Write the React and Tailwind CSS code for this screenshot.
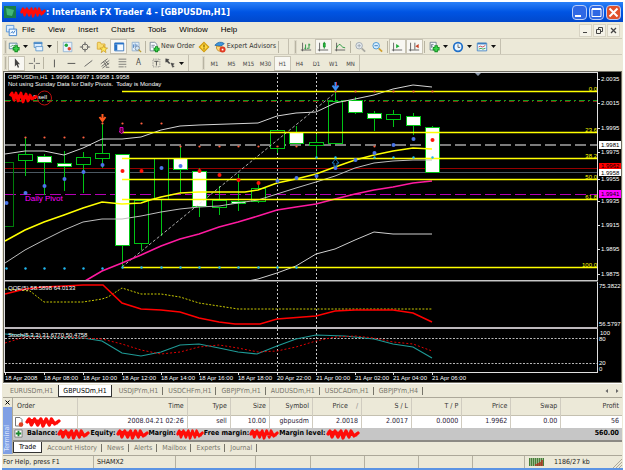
import React from "react";

const UI = "font-['DejaVu_Sans_Condensed','DejaVu_Sans',sans-serif]";

/* ---------- chart data ---------- */
const candles = [
  // x, high, low, bodyTop, bodyBottom, filled
  [25, 137, 176, 154, 160, 0],
  [44, 154, 195, 156, 162, 1],
  [64, 151, 191, 163, 166, 1],
  [83, 152, 193, 157, 164, 0],
  [102, 123, 168, 153, 158, 0],
  [122, 154, 266, 154, 245, 1],
  [141, 200, 250, 200, 243, 0],
  [161, 158, 236, 158, 199, 0],
  [180, 146, 193, 158, 169, 1],
  [199, 168, 217, 171, 206, 1],
  [219, 186, 215, 200, 207, 0],
  [238, 174, 211, 201, 203, 1],
  [258, 184, 203, 188, 201, 0],
  [277, 130, 153, 130, 148, 0],
  [296, 126, 144, 132, 143, 1],
  [316, 134, 157, 142, 145, 0],
  [335, 90, 144, 101, 143, 0],
  [355, 97, 114, 100, 112, 1],
  [374, 111, 131, 113, 118, 1],
  [393, 110, 127, 114, 119, 0],
  [413, 113, 135, 116, 125, 1],
  [432, 126, 173, 127, 172, 1],
];
const upperBand = "5,154 25,151 44,151 64,155 83,148 102,139 122,139 141,137 161,130 180,126 199,125 258,123 277,116 296,113 316,112 335,103 355,99 374,95 393,89 413,85 432,87";
const midBand = "5,263 25,250 44,240 64,230 83,222 102,219 122,219 141,216 161,212 180,209 199,207 219,206 238,203 258,200 277,194 296,188 316,182 335,176 355,168 374,163 393,161 413,160 432,160";
const lowerBand = "248,281 258,279 277,273 296,266 316,254 335,249 355,240 374,232 393,234 432,234";
const yellowMa = "5,241 25,230 44,222 64,215 83,208 102,202 122,204 141,203 150,200 161,197 180,193 199,192 245,192 258,190 277,183 296,179 316,174 335,167 355,160 374,155 393,151 413,148 432,149";
const pinkMa = "85,281 102,271 122,263 141,255 161,246 180,239 199,234 219,227 238,222 258,216 277,210 296,207 316,204 335,199 355,194 374,190 393,187 413,183 432,181";
const qqeRed = "5,294 25,289 44,287 64,286 83,285 103,285 122,303 141,309 161,310 180,312 199,318 219,322 235,324 260,324 277,319 316,316 335,311 355,310 393,310 413,313 432,322";
const qqeYellow = "5,289 30,291 44,302 83,302 102,299 108,297 122,288 141,294 161,294 180,297 199,303 238,309 432,309";
const stochTeal = "5,334 44,337 83,338 102,341 122,353 141,356 161,352 180,345 199,344 219,348 238,352 257,354 277,346 296,339 316,335 345,336 374,339 393,344 413,347 432,358";
const stochRed = "5,343 25,337 64,337 102,339 122,344 141,350 161,354 180,352 199,347 219,345 238,348 258,352 277,351 296,347 316,341 335,337 355,336 374,338 393,342 413,344 432,351";
const fib = [[91.5, "0.0"], [132.5, "23.6"], [158.5, "38.2"], [179.5, "50.0"], [199.5, "61.8"], [267.5, "100.0"]];
const fractals = [[25, 137], [44, 137], [64, 137], [83, 137], [102, 123], [122, 123], [141, 123], [161, 123], [180, 146], [199, 146], [219, 146], [238, 146], [258, 146], [277, 146], [296, 146], [374, 146], [335, 91], [355, 91], [374, 91], [393, 91], [413, 91], [432, 91]];
const supports = [[6, 268], [25, 268], [44, 268], [64, 268], [83, 268], [102, 268], [122, 267], [141, 267], [161, 267], [180, 267], [199, 267], [219, 267], [238, 267], [258, 267], [277, 267], [296, 267], [316, 157], [335, 157], [374, 157], [393, 157], [413, 157], [432, 157]];
const blueDots = [[6, 203], [25, 193], [44, 186], [64, 179], [83, 172], [102, 165], [161, 168], [180, 166], [277, 181], [296, 178], [316, 176], [335, 168], [355, 160], [374, 153], [393, 145], [413, 139]];
const redDots = [[122, 171], [141, 171], [199, 171], [219, 175], [238, 180], [258, 183], [432, 140]];
const prices = [[79, "2.0035"], [103, "2.0015"], [128, "1.9995"], [152, "1.9975"], [179, "1.9955"], [201, "1.9935"], [225, "1.9915"], [249, "1.9895"], [274, "1.9875"]];
const times = [[5, "18 Apr 2008"], [44, "18 Apr 08:00"], [83, "18 Apr 10:00"], [122, "18 Apr 12:00"], [161, "18 Apr 14:00"], [199, "18 Apr 16:00"], [238, "18 Apr 18:00"], [277, "20 Apr 22:00"], [316, "21 Apr 00:00"], [355, "21 Apr 02:00"], [393, "21 Apr 04:00"], [432, "21 Apr 06:00"]];

function Chart() {
  return (
    <svg viewBox="4 72 617 310" className="block w-full bg-black font-['Liberation_Sans',sans-serif] text-[6px]" role="img" aria-label="GBPUSDm H1 candlestick chart">
      <g fill="none" shapeRendering="crispEdges">
        <path d="M277.5 73V372M316.5 73V372" stroke="#c8c8c8" strokeDasharray="2 2" />
        <path d="M5 100.5H597" stroke="#0fa01c" strokeDasharray="6 3 2 3" />
        <path d="M5 101.5H597" stroke="#8a2010" strokeDasharray="5 4 1 4" />
        <path d="M5 145H597" stroke="#7c7c7c" strokeWidth="2" strokeDasharray="11 4" />
        <path d="M5 194.5H597" stroke="#b400b4" strokeDasharray="11 4" />
        <path d="M5 168.5H597" stroke="#960000" />
        <path d="M5 172.5H597" stroke="#4c5862" />
      </g>
      <g shapeRendering="crispEdges" stroke="#00c414">
        <path d="M5 162.5H13.5V226.5H5" fill="none" stroke="#007d0a" />
        {candles.map(([x, hi, lo, top, bottom, filled]) => (
          <g key={x}>
            <path d={`M${x + 0.5} ${hi}V${lo}`} />
            <rect x={x - 6.5} y={top + 0.5} width="14" height={bottom - top} fill={filled ? "#fff" : "#000"} />
          </g>
        ))}
      </g>
      <g fill="none">
        <path d="M122 267L335 93" stroke="#d8d8d8" strokeWidth="0.8" strokeDasharray="3 2" />
        <polyline points={upperBand} stroke="#d4d4d4" />
        <polyline points={midBand} stroke="#bdbdbd" />
        <polyline points={lowerBand} stroke="#cfcfcf" />
        <polyline points={pinkMa} stroke="#ff1aa0" strokeWidth="1.5" />
        <polyline points={yellowMa} stroke="#ffff00" strokeWidth="1.5" />
      </g>
      {fib.map(([y, label]) => (
        <g key={label}>
          <path d={`M122 ${y}H597`} stroke="#ffff00" strokeWidth="1.4" />
          <text x="597" y={y - 1} textAnchor="end" fill="#ffff00">{label}</text>
        </g>
      ))}
      <g fill="#ff6040">{fractals.map(([x, y]) => <circle key={`${x}-${y}`} cx={x + 0.5} cy={y + 0.5} r="1.1" />)}</g>
      <g fill="#20b8f0">{supports.map(([x, y]) => <circle key={`${x}-${y}`} cx={x + 0.5} cy={y + 0.5} r="1.2" />)}</g>
      <g fill="#4a76e8">{blueDots.map(([x, y]) => <circle key={x} cx={x + 0.5} cy={y} r="2" />)}</g>
      <g fill="#ff1508">{redDots.map(([x, y]) => <circle key={x} cx={x + 0.5} cy={y} r="2" />)}</g>

      <path d="M102.5 114V121M99.5 117L102.5 121L105.5 117" fill="none" stroke="#ff5a1e" strokeWidth="2" />
      <path d="M120 127.500H123V131.500H124L121.500 133.500L119 131.500H120Z" fill="#5a0030" stroke="#d800c0" />
      <path d="M335.5 82V89M332.5 85.500L335.5 89.500L338.5 85.500" fill="none" stroke="#3f8cf0" strokeWidth="2" />
      <path d="M336.5 82V86" stroke="#c03048" />
      <path d="M334 166V163H332L335.5 159L339 163H337V166Z" fill="none" stroke="#1874b8" />
      <path d="M475 73H481L478 76Z" fill="#8a97a8" />

      <g fill="none" strokeWidth="1">
        <polyline points={qqeYellow} stroke="#c9c900" strokeDasharray="2 1.5" />
        <polyline points={qqeRed} stroke="#ff0000" strokeWidth="1.6" />
        <path d="M5 338.5H597M5 363.5H597" stroke="#b8b8b8" strokeDasharray="2 1.5" />
        <polyline points={stochTeal} stroke="#1f9a96" strokeWidth="1.2" />
        <polyline points={stochRed} stroke="#e00000" strokeDasharray="2 2" />
      </g>

      <g shapeRendering="crispEdges" fill="none">
        <path d="M4.5 72V373M5 72.5H598M597.5 72V372M4 372.5H598" stroke="#e0e0e0" />
        <path d="M5 280.5H598" stroke="#c8c8c8" />
        <path d="M5 281.5H598" stroke="#606060" />
        <path d="M5 328H598" stroke="#bcb8bc" strokeWidth="2" />
        {prices.map(([y]) => <path key={y} d={`M598 ${y + 0.5}H600`} stroke="#e0e0e0" />)}
        {times.map(([x]) => <path key={x} d={`M${x + 0.5} 373V375`} stroke="#e0e0e0" />)}
      </g>

      <g fill="#ffffff">
        <text x="8" y="79" xmlSpace="preserve">GBPUSDm,H1  1.9996 1.9997 1.9958 1.9958</text>
        <text x="8" y="86" xmlSpace="preserve">Not using Sunday Data for Daily Pivots.  Today is Monday</text>
        <text x="33" y="99">0 sell</text>
        <text x="8" y="290">QQE(5) 58.5898 64.0133</text>
        <text x="8" y="337">Stoch(5,3,3) 31.6770 50.4758</text>
        {prices.map(([y, p]) => <text key={p} x="601" y={y + 2}>{p}</text>)}
        <text x="599" y="288">75.3822</text>
        <text x="599" y="326">56.5797</text>
        <text x="600" y="335">100</text>
        <text x="599" y="341">80</text>
        <text x="599" y="365">20</text>
        <text x="599" y="371">0</text>
        {times.map(([x, t]) => <text key={t} x={x} y="380">{t}</text>)}
      </g>
      <rect x="599" y="141" width="22" height="8" fill="#fff" />
      <text x="601" y="147">1.9981</text>
      <rect x="599" y="163" width="22" height="6" fill="#ff0000" />
      <text x="601" y="168">1.9962</text>
      <rect x="599" y="169" width="22" height="7" fill="#fff" />
      <text x="601" y="175">1.9958</text>
      <rect x="599" y="190" width="22" height="8" fill="#ff00ff" />
      <text x="601" y="196">1.9941</text>
      <text x="25" y="201" fill="#ff00ff" className="text-[8px]">Daily Pivot</text>

      <circle cx="44.5" cy="98" r="7" fill="none" stroke="#c01010" />
      <path d="M10 96L12 93L14 100L16 93L18 101L21 93L23 102L26 94L28 101L30 95L32 99L37 96M11 95L33 98" fill="none" stroke="#ff0000" strokeWidth="2.8" strokeLinejoin="round" />
    </svg>
  );
}

/* ---------- icons ---------- */
const art = {
  newChart: <><path d="M1.5 2.5H10.5V9H1.5Z" fill="#eef6ff" stroke="#527e9c" /><path d="M3 7L5 5L7 6L9 4" stroke="#3f9a4a" fill="none" /><path d="M9.5 5V13M5.5 9H13.5" stroke="#118a1e" strokeWidth="4" /><path d="M9.5 6V12M6.5 9H12.5" stroke="#38cf4b" strokeWidth="2" /></>,
  profiles: <><path d="M2.5 1.5H11.5V7.5H2.5Z" fill="#d9ecff" stroke="#4d8cc8" /><path d="M2 2.5H12" stroke="#4d8cc8" strokeWidth="2" /><path d="M4.5 6.5H12.5V11.5H4.5Z" fill="#e8f4ff" stroke="#5f98cc" /></>,
  market: <><path d="M1.5 1.5H11.5V12.5H1.5Z" fill="#e8f3fd" stroke="#8fb2d4" /><circle cx="5" cy="5" r="2" fill="#20a83c" /><circle cx="8.5" cy="9" r="2" fill="#e04a30" /></>,
  target: <g fill="none" stroke="#555"><circle cx="7" cy="7" r="3.5" /><path d="M7 1V5M7 9V13M1 7H5M9 7H13" /></g>,
  favorites: <><path d="M1.5 2.5V9.5H10.5V3.5H6L5 1.5H2Z" fill="#f8dc70" stroke="#d8a834" /><path d="M9 5L10.300 8L13.5 8.300L11 10.200L11.600 13.5L9 11.5L6 13.5L7 10.200L4.5 8.300L8 8Z" fill="#ffe85a" stroke="#c8941a" strokeWidth=".8" /></>,
  navigator: <><path d="M2 2.5H12.5V11.5H2Z" fill="#f4faff" stroke="#2b6eb8" /><path d="M2 3H12.5" stroke="#2672c8" strokeWidth="2" /><path d="M3.5 4V11" stroke="#2672c8" strokeWidth="3" /></>,
  tester: <><path d="M2.5 1.5H10.5V11.5H2.5Z" fill="#e2effa" stroke="#8faecb" /><path d="M4 4V8M6 3V7M8 4V6" stroke="#3d76b8" /><circle cx="8.5" cy="8.5" r="2.5" fill="#cfe6f4" stroke="#7d8fa8" /><path d="M10 10L13 13" stroke="#b99a30" strokeWidth="1.5" /></>,
  order: <><path d="M2.5 1.5H8L10.5 4V11.5H2.5Z" fill="#f8fcff" stroke="#708090" /><path d="M4 5H8M4 7H7" stroke="#708090" /><path d="M10 6V13M6.5 9.5H13.5" stroke="#128c20" strokeWidth="3.5" /><path d="M10 7V12M7.5 9.5H12.5" stroke="#38d24c" strokeWidth="1.5" /></>,
  meta: <><path d="M7 1.5L12.5 7L7 12.5L1.5 7Z" fill="#ffd840" stroke="#d09c10" strokeWidth="1.3" /><path d="M7 4V7.5M7 8.5V10" stroke="#7a5800" strokeWidth="1.3" /></>,
  expert: <><path d="M1 5Q6 -1 12 3L8 6Z" fill="#3f96dc" stroke="#2068a8" /><path d="M3 6Q2 11 7 12Q10 12 10 7Z" fill="#ffd978" stroke="#c08a28" /><circle cx="10" cy="10" r="3.5" fill="#e03820" /><path d="M9 9H11V11H9Z" fill="#fff" /></>,
  bars: <g fill="none" stroke="#555"><path d="M3 2V12M1 10.5H13" /><path d="M6.5 4V10M6 8.5H5M10.5 3V9M10 4.5H12M10 8.5H8" stroke="#159030" /></g>,
  candle: <g fill="none" stroke="#555"><path d="M3 2V12M1 10.5H13" /><path d="M8.5 1V9" stroke="#159030" /><path d="M7.5 2.5H9.5V7H7.5Z" fill="#28c848" stroke="#118a22" /></g>,
  line: <g fill="none" stroke="#555"><path d="M3 2V12M1 10.5H13" /><path d="M3 8Q6 2 8 5T13 8" stroke="#159030" /></g>,
  zoomIn: <><circle cx="6" cy="5.5" r="3.800" fill="#e5eaee" stroke="#9aa4ac" /><path d="M4 5.5H8M6 3.5V7.5" stroke="#9aa4ac" /><path d="M9 8.5L13 12.5" stroke="#a8a8a0" strokeWidth="2" /></>,
  zoomOut: <><circle cx="6" cy="5.5" r="3.800" fill="#d6efff" stroke="#3c8fd0" /><path d="M4 5.5H8" stroke="#2a6cac" /><path d="M9 8.5L13 12.5" stroke="#d0a030" strokeWidth="2" /></>,
  scroll: <><path d="M3 2V12M1 10.5H13" stroke="#555" /><path d="M6 3.5L10 6L6 8.5Z" fill="#20ac3a" /></>,
  shift: <><path d="M3 2V12M1 10.5H13M8 2V10" stroke="#555" /><path d="M12.5 3.5V8.5L8.5 6Z" fill="#c84428" /></>,
  indicators: <><path d="M2.5 1.5H9.5V10.5H2.5Z" fill="#f8fcff" stroke="#687888" /><path d="M4 8V4H6.5M4 6H6" stroke="#687888" fill="none" /><path d="M9.5 5V13M5.5 9H13.5" stroke="#128c20" strokeWidth="4" /><path d="M9.5 6V12M6.5 9H12.5" stroke="#38d24c" strokeWidth="2" /></>,
  clock: <><circle cx="7" cy="7" r="5" fill="#eaf6ff" stroke="#1f6fc8" strokeWidth="2" /><path d="M7 4V7.5H9.5" stroke="#555" fill="none" /></>,
  template: <><path d="M1.5 2.5H12.5V11.5H1.5Z" fill="#f0f8ff" stroke="#3f80c0" /><path d="M2 3H12" stroke="#3f80c0" strokeWidth="2" /><path d="M3 7L5 6L8 7L11 5" stroke="#c84040" fill="none" /><path d="M3 9.5L6 8.5L8 9.5L11 8.5" stroke="#2a9a3a" fill="none" /></>,
  cursor: <path d="M4.5 1.5V11L6.5 9L8 12.5L9.5 12L8 8.5H10.5Z" fill="#444" />,
  cross: <path d="M7.5 1V6M7.5 9V14M1 7.5H6M9 7.5H14" stroke="#666" />,
  vline: <path d="M7.5 3V12" stroke="#444" />,
  hline: <path d="M3 7.5H12" stroke="#444" />,
  trend: <path d="M3 11L12 4" stroke="#555" />,
  channel: <path d="M2 8L10 2M4 13L12 7M3 11L12 4M5 5L9 11M7 4L11 9M8 12H12" stroke="#555" strokeWidth=".9" />,
  fibo: <path d="M3 2.5H12M3 5.5H12M3 8.5H12M3 11.5H9M10 11.5H12" stroke="#555" strokeWidth=".8" />,
  label: <><path d="M3.5 2.5H11.5V11.5H3.5Z" fill="none" stroke="#777" strokeDasharray="1 1" /><path d="M5 5H10M7.5 5V10" stroke="#444" /></>,
  shapes: <path d="M2 2L6 3L4.5 4.5L7 7L6 8L3.500 5.500L2 6ZM8 7L12 8L10 9.500L12 11L10 12Z" fill="#444" stroke="#444" strokeWidth=".5" />,
};

function Icon({ name }) {
  return <svg viewBox="0 0 14 14" className="size-3 shrink-0" fill="none" aria-hidden="true">{art[name]}</svg>;
}

function Tool({ icon, label, children, menu, pressed, wide }) {
  const width = wide ? "gap-px px-px justify-center" : menu ? "w-6 justify-start" : "w-[17px] justify-center";
  const state = pressed ? "bg-[#f8f7f2] border border-[#c8c4b4]" : "";
  return (
    <button type="button" aria-label={label} className={`flex h-[15px] shrink-0 items-center ${width} ${state}`}>
      {icon && <Icon name={icon} />}
      {children}
      {menu && <svg viewBox="0 0 5 3" className="ml-[3px] h-[3px] w-[5px]" aria-hidden="true"><path d="M0 0H5L2.5 3Z" fill="#111" /></svg>}
    </button>
  );
}

const Grip = () => <span className="mx-[2px] h-3 w-px shrink-0 bg-[#b8b4a2] ring-1 ring-[#dcd8c8]" />;
const Sep = () => <span className="mx-px h-3 w-px shrink-0 bg-[#b8b4a2]" />;

function Scribble({ className }) {
  return (
    <svg viewBox="0 0 34 12" preserveAspectRatio="none" className={`h-3 shrink-0 ${className}`} aria-hidden="true">
      <path d="M2 6L4 3L6 9L9 3L12 9L15 3L17 10L20 3L23 9L25 3L28 8L32 5M3 4L30 7" fill="none" stroke="#ff0c08" strokeWidth="3.2" strokeLinejoin="round" strokeLinecap="round" />
    </svg>
  );
}

function TitleBar() {
  const btn = "flex size-[15px] items-center justify-center rounded-sm border border-[#b8cdf8]";
  return (
    <header className="flex h-5 items-center gap-1 bg-gradient-to-b from-[#2a80f8] via-[#0054e3] to-[#0148cc] px-[2px] text-white">
      <svg viewBox="0 0 12 12" className="h-3 w-3" aria-hidden="true"><path d="M0 0H12V12H0Z" fill="#187f4a" /><path d="M2 2L10 4L8 10L3 9Z" fill="#41b878" /></svg>
      <h1 className="flex items-center text-[9px] leading-3 font-bold whitespace-pre">
        <Scribble className="w-[26px]" />: Interbank FX Trader 4 - [GBPUSDm,H1]
      </h1>
      <div className="ml-auto flex gap-[2px]">
        <button type="button" aria-label="Minimize" className={`${btn} bg-[#2f68e4]`}><svg viewBox="0 0 11 11" className="size-[11px]"><path d="M1 9H7" stroke="#fff" strokeWidth="2" /></svg></button>
        <button type="button" aria-label="Maximize" className={`${btn} bg-[#2f68e4]`}><svg viewBox="0 0 11 11" className="size-[11px]"><path d="M1 2H10" stroke="#fff" strokeWidth="2" /><path d="M1 2H10V9.5H1Z" fill="none" stroke="#fff" /></svg></button>
        <button type="button" aria-label="Close" className={`${btn} bg-[#e0512c]`}><svg viewBox="0 0 11 11" className="size-[11px]"><path d="M1.5 1.5L9.5 9.5M9.5 1.5L1.5 9.5" stroke="#fff" strokeWidth="2" /></svg></button>
      </div>
    </header>
  );
}

function MenuBar() {
  const small = "flex size-[13px] items-center justify-center border border-[#d8d4c4] bg-[#f4f2e8]";
  return (
    <nav className="flex h-4 items-center px-[2px] font-['Liberation_Sans',sans-serif] text-[8px] leading-3">
      <svg viewBox="0 0 14 14" className="mr-1 size-[13px]" aria-hidden="true"><path d="M1.5 1.5H9.5V8.5H1.5Z" fill="#dceeff" stroke="#5a96d8" /><path d="M4.5 5.5H12.5V12.5H4.5Z" fill="#f2f9ff" stroke="#3d80cc" /><path d="M6 10L8 8L9 10L11 7" fill="none" stroke="#3d80cc" /></svg>
      <ul className="flex gap-[13px]">
        {["File", "View", "Insert", "Charts", "Tools", "Window", "Help"].map((m) => (
          <li key={m}><button type="button">{m}</button></li>
        ))}
      </ul>
      <div className="ml-auto flex gap-px">
        <button type="button" aria-label="Minimize chart" className={small}><svg viewBox="0 0 7 7" className="size-[7px]"><path d="M1 5.5H5" stroke="#444" /></svg></button>
        <button type="button" aria-label="Restore chart" className={small}><svg viewBox="0 0 7 7" className="size-[7px]" fill="none" stroke="#444"><path d="M2.5 2V.5H6.5V4.5H5M.5 2.5H4.5V6.5H.5Z" /></svg></button>
        <button type="button" aria-label="Close chart" className={small}><svg viewBox="0 0 7 7" className="size-[7px]"><path d="M1 1L6 6M6 1L1 6" stroke="#444" strokeWidth="1.3" /></svg></button>
      </div>
    </nav>
  );
}

const bar = "flex items-center border-r border-[#c4c0b0]";

function Toolbars() {
  return (
    <>
      <div className="flex h-[17px] border-y border-[#d0ccbc] text-[7px] text-[#333]">
        <div className={`${bar} pr-2`}>
          <Grip />
          <Tool icon="newChart" label="New chart" menu />
          <Tool icon="profiles" label="Profiles" menu />
          <Sep />
          <Tool icon="market" label="Market Watch" />
          <Tool icon="target" label="Data Window" />
          <Tool icon="favorites" label="Favorites" />
          <Tool icon="navigator" label="Navigator" pressed />
          <Tool icon="tester" label="Strategy Tester" />
          <Sep />
          <Tool icon="order" wide>New Order</Tool>
          <Tool icon="meta" label="MetaEditor" />
          <Tool icon="expert" wide>Expert Advisors</Tool>
          <Sep />
        </div>
        <div className={`${bar} ml-1`}>
          <Grip />
          <Tool icon="bars" label="Bar chart" />
          <Tool icon="candle" label="Candlesticks" pressed />
          <Tool icon="line" label="Line chart" />
          <Sep />
          <Tool icon="zoomIn" label="Zoom in" />
          <Tool icon="zoomOut" label="Zoom out" />
          <Sep />
          <Tool icon="scroll" label="Auto scroll" pressed />
          <Tool icon="shift" label="Chart shift" pressed />
          <Sep />
          <div className="flex pl-[2px]">
            <Tool icon="indicators" label="Indicators" menu />
            <Tool icon="clock" label="Periods" menu />
            <Tool icon="template" label="Templates" menu />
          </div>
        </div>
      </div>
      <div className="flex h-4 text-[7px] text-[#444]">
        <div className={bar}>
          <Grip />
          <Tool icon="cursor" label="Cursor" pressed />
          <Tool icon="cross" label="Crosshair" />
          <Sep />
          <Tool icon="vline" label="Vertical line" />
          <Tool icon="hline" label="Horizontal line" />
          <Tool icon="trend" label="Trendline" />
          <Tool icon="channel" label="Channel" />
          <Tool icon="fibo" label="Fibonacci" />
          <Tool label="Text"><span className="text-[8px]">A</span></Tool>
          <Tool icon="label" label="Text label" />
          <Tool icon="shapes" label="Arrows" menu />
        </div>
        <div className={`${bar} ml-3 text-[6px]`}>
          <Grip />
          {["M1", "M5", "M15", "M30", "H1", "H4", "D1", "W1", "MN"].map((t) => (
            <Tool key={t} pressed={t === "H1"}>{t}</Tool>
          ))}
        </div>
      </div>
    </>
  );
}

function TabLabel({ children }) {
  return (
    <button type="button" role="tab" className="flex items-center pl-[5px]">
      {children}<span className="ml-[4px] h-2 w-px bg-[#77756a]" />
    </button>
  );
}

function ChartTabs() {
  const tabs = ["USDJPYm,H1", "USDCHFm,H1", "GBPJPYm,H1", "AUDUSDm,H1", "USDCADm,H1", "GBPJPYm,H4"];
  return (
    <div role="tablist" className="flex h-[14px] items-center border-t border-white text-[7px] leading-3 text-[#77756a]">
      <button type="button" role="tab" className="pr-[5px] pl-[7px]">EURUSDm,H1</button>
      <button type="button" role="tab" aria-selected="true" className="mr-[2px] h-3 border-r border-b border-l border-[#333] bg-white px-1 text-black">GBPUSDm,H1</button>
      {tabs.map((t) => <TabLabel key={t}>{t}</TabLabel>)}
      <div className="mr-[2px] ml-auto flex gap-1">
        <button type="button" aria-label="Scroll left"><svg viewBox="0 0 6 6" className="size-[6px]"><path d="M4 1V5L1.5 3Z" fill="#666" /></svg></button>
        <button type="button" aria-label="Scroll right"><svg viewBox="0 0 6 6" className="size-[6px]"><path d="M2 1V5L4.5 3Z" fill="#666" /></svg></button>
      </div>
    </div>
  );
}

const columns = [["Order", 64], ["Time", 110], ["Type", 43], ["Size", 39], ["Symbol", 43], ["Price", 49], ["S / L", 50], ["T / P", 50], ["Price", 49], ["Swap", 50], ["Profit", 61]];
const trade = ["2008.04.21 02:26", "sell", "10.00", "gbpusdm", "2.0018", "2.0017", "0.0000", "1.9962", "0.00", "56"];
const total = columns.reduce((sum, [, w]) => sum + w, 0);

function Terminal() {
  const cell = "border-r border-[#d0ccc0] py-0 pr-[3px] text-right font-normal last:border-r-0";
  return (
    <section className="flex border-t border-[#aca899]" aria-label="Terminal">
      <div className="flex w-[9px] shrink-0 flex-col">
        <button type="button" aria-label="Close terminal" className="flex h-[9px] items-center justify-center"><svg viewBox="0 0 5 5" className="size-[5px]"><path d="M.5 .5L4.5 4.5M4.5 .5L.5 4.5" stroke="#000" /></svg></button>
        <div className="flex grow items-end justify-center bg-[#7f9fe4] pb-[2px]">
          <span className="rotate-180 text-[7px] leading-[9px] text-[#dbe6ff] [writing-mode:vertical-rl]">Terminal</span>
        </div>
      </div>
      <div className="min-w-0 grow border-l border-[#aca899]">
        <table className="w-full table-fixed border-collapse text-[7px] leading-[11px] whitespace-nowrap">
          <colgroup>{columns.map(([, w], i) => <col key={i} style={{ width: `${(w / total) * 100}%` }} />)}</colgroup>
          <thead className="bg-[#ece9d8] text-[#333]">
            <tr className="h-[17px] border-b border-[#c4c0b0]">
              {columns.map(([name], i) => (
                <th key={i} scope="col" className={i === 0 ? "border-r border-[#d0ccc0] p-0 pl-1 text-left font-normal" : cell}>
                  {name}{i === 5 && <span className="ml-2 text-[#888]">/</span>}
                </th>
              ))}
            </tr>
          </thead>
          <tbody className="bg-white text-[#2c1c38]">
            <tr className="h-3">
              <td className="border-r border-[#d0ccc0] p-0">
                <div className="flex items-center gap-px pl-px">
                  <svg viewBox="0 0 10 10" className="size-[10px]" aria-hidden="true"><path d="M1.5 .5H6L8 2.5V9H1.5Z" fill="#fff" stroke="#777" /><circle cx="7" cy="7.5" r="2.3" fill="#e04020" /></svg>
                  <Scribble className="w-9" />
                </div>
              </td>
              {trade.map((v, i) => <td key={i} className={cell}>{v}</td>)}
            </tr>
          </tbody>
          <tfoot className="bg-[#c6c6c6] font-bold text-black">
            <tr className="h-3 border-b-2 border-[#8c8a84]">
              <td colSpan={10} className="p-0">
                <div className="flex items-center">
                  <svg viewBox="0 0 10 10" className="mr-[4px] ml-px size-[9px]" aria-hidden="true"><path d="M1 1H9V9H1Z" fill="#fff" stroke="#777" /><path d="M5 2V8M2 5H8" stroke="#18882c" strokeWidth="2" /></svg>
                  Balance:<Scribble className="w-[33px]" />
                  Equity:<Scribble className="w-[33px]" />
                  Margin:<Scribble className="w-7" />
                  Free margin:<Scribble className="w-[30px]" />
                  Margin level:<Scribble className="w-[34px]" />
                </div>
              </td>
              <td className="p-0 pr-[3px] text-right">560.00</td>
            </tr>
          </tfoot>
        </table>
        <div role="tablist" className="flex h-3 items-center text-[7px] leading-[10px] text-[#77756a]">
          <button type="button" role="tab" aria-selected="true" className="h-[11px] self-start border-r border-b border-l border-[#333] bg-white px-[5px] text-black">Trade</button>
          {["Account History", "News", "Alerts", "Mailbox", "Experts", "Journal"].map((t) => <TabLabel key={t}>{t}</TabLabel>)}
        </div>
      </div>
    </section>
  );
}

function StatusBar() {
  const part = "flex h-3 items-center border-r border-[#b4b0a0] pl-[3px]";
  return (
    <footer className="mt-px flex h-[13px] items-center border-t border-[#aca899] text-[7px] leading-3 text-[#222]">
      <span className="flex h-3 w-[91px] items-center border-r border-[#b4b0a0]">For Help, press F1</span>
      <span className={`${part} w-[82px]`}>SHAMX2</span>
      <span className={`${part} w-20`} />
      <span className={`${part} w-[55px]`} />
      <span className={`${part} w-[54px]`} />
      <span className={`${part} w-[54px]`} />
      <span className={`${part} w-[54px]`} />
      <span className={`${part} w-[52px]`} />
      <svg viewBox="0 0 15 8" className="ml-1 h-2 w-[15px]" aria-hidden="true">
        <path d="M0 4H15" stroke="#47803a" strokeWidth="8" strokeDasharray="1.5 .5" />
        <path d="M9 8V5M11 8V4M13 8V2M7 8V6" stroke="#b03020" strokeWidth="1.5" />
      </svg>
      <span className="ml-[10px]">1186/27 kb</span>
      <svg viewBox="0 0 9 9" className="ml-auto size-[9px] self-end" aria-hidden="true"><path d="M0 9L9 0M3 9L9 3M6 9L9 6" stroke="#aca899" /></svg>
    </footer>
  );
}

export default function App() {
  return (
    <main className={`bg-white px-[2px] pt-[2px] text-black ${UI}`}>
      <div className="border-b-2 border-[#5c94e4] bg-[#ece9d8] px-px">
        <div className="-mx-px"><TitleBar /></div>
        <MenuBar />
        <Toolbars />
        <div className="border border-[#716f64]"><Chart /></div>
        <ChartTabs />
        <Terminal />
        <StatusBar />
      </div>
    </main>
  );
}
